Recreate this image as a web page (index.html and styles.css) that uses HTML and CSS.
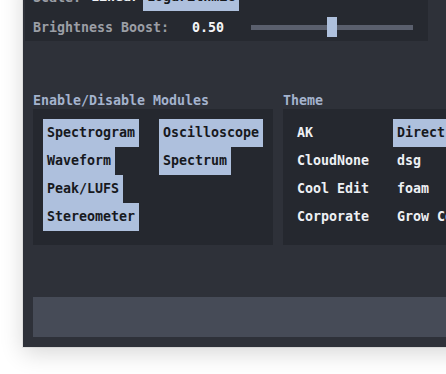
FILE: index.html
```html
<!DOCTYPE html>
<html lang="en">
<head>
    <meta charset="UTF-8">
    <meta name="viewport" content="width=device-width, initial-scale=1.0">
    <title>Settings</title>
    <link rel="stylesheet" href="styles.css">
</head>
<body>
    <div class="window">
        <div class="controls">
            <div class="scale-row">
                <span class="label">Scale:</span>
                <div class="options">
                    <span class="opt">Linear</span>
                    <span class="opt selected">Logarithmic</span>
                </div>
            </div>
            <div class="boost-row">
                <span class="label">Brightness Boost:</span>
                <span class="value">0.50</span>
                <div class="slider">
                    <div class="track"></div>
                    <div class="thumb" style="left: 50%"></div>
                </div>
            </div>
        </div>

        <div class="sections">
            <section class="modules">
                <h2>Enable/Disable Modules</h2>
                <div class="panel list">
                    <span class="opt selected">Spectrogram</span>
                    <span class="opt selected">Oscilloscope</span>
                    <span class="opt selected">Waveform</span>
                    <span class="opt selected">Spectrum</span>
                    <span class="opt selected">Peak/LUFS</span>
                    <span></span>
                    <span class="opt selected">Stereometer</span>
                </div>
            </section>
            <section class="themes">
                <h2>Theme</h2>
                <div class="panel list theme-list">
                    <span class="opt">AK</span>
                    <span class="opt selected">Direct</span>
                    <span class="opt">CloudNone</span>
                    <span class="opt">dsg</span>
                    <span class="opt">Cool Edit</span>
                    <span class="opt">foam</span>
                    <span class="opt">Corporate</span>
                    <span class="opt">Grow Cold</span>
                </div>
            </section>
        </div>

        <div class="footer-bar"></div>
    </div>
</body>
</html>
```

FILE: styles.css
```css
html {
    background-color: #fff;
}

body {
    margin: 0;
    padding-bottom: 27px;
    overflow: hidden;
    font-family: "DejaVu Sans Mono", "Liberation Mono", monospace;
    font-size: 13.3px;
    font-weight: bold;
}

.window {
    margin: -27px 0 0 23px;
    width: 600px;
    padding-bottom: 10px;
    background-color: #2e3139;
    box-shadow: 0 0 0 1px rgba(0, 0, 0, 0.06), 0 6px 22px rgba(0, 0, 0, 0.16);
}

.controls {
    margin-left: 2px;
    width: 387px;
    padding: 10px 8px 0 8px;
    background-color: #262930;
    display: flex;
    flex-direction: column;
    gap: 2px;
}

.label {
    color: #9b9ea5;
}

.scale-row {
    display: flex;
    align-items: center;
    gap: 6px;
    height: 28px;
}

.options {
    display: flex;
}

.opt {
    display: inline-block;
    height: 28px;
    line-height: 28px;
    padding: 0 4px;
    color: #eef0f4;
    white-space: nowrap;
}

.opt.selected {
    background-color: #aec0dd;
    color: #17191e;
}

.boost-row {
    display: grid;
    grid-template-columns: 159px 59px 162px;
    align-items: center;
    height: 28px;
}

.value {
    color: #f4f5f7;
}

.slider {
    position: relative;
    height: 20px;
    display: flex;
    align-items: center;
}

.track {
    width: 100%;
    height: 5px;
    background-color: #5a5f6d;
}

.thumb {
    position: absolute;
    top: 0;
    width: 10px;
    height: 20px;
    margin-left: -5px;
    background-color: #aec0dd;
}

.sections {
    display: flex;
    gap: 10px;
    margin: 50px 0 0 10px;
}

h2 {
    margin: 0;
    height: 18px;
    line-height: 19px;
    font-size: 13.3px;
    color: #a4b3cd;
}

.panel {
    background-color: #25282f;
    padding: 10px 10px 14px 10px;
}

.modules .panel {
    width: 220px;
}

.themes .panel {
    width: 400px;
}

.list {
    display: grid;
    grid-template-columns: auto auto;
    justify-content: start;
    justify-items: start;
    column-gap: 20px;
}

.theme-list {
    grid-template-columns: 80px auto;
}

.footer-bar {
    margin: 52px 0 0 10px;
    height: 40px;
    background-color: #464b57;
}
```
